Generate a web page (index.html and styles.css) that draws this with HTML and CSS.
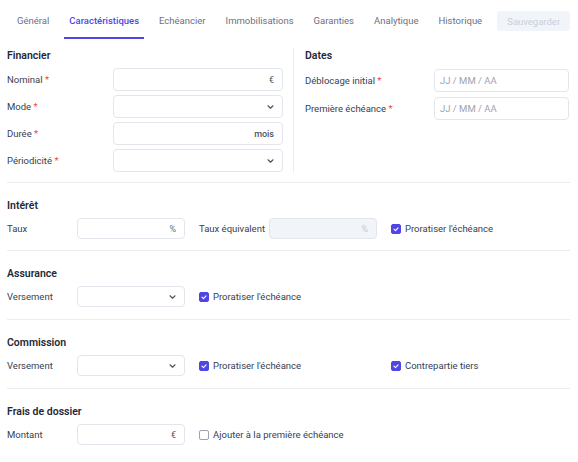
FILE: index.html
```html
<!DOCTYPE html>
<html lang="fr">
<head>
<meta charset="utf-8">
<title>Caractéristiques</title>
<link rel="stylesheet" href="styles.css">
</head>
<body>
<div class="page">
  <nav class="tabs">
    <span class="tab">Général</span>
    <span class="tab active">Caractéristiques</span>
    <span class="tab">Echéancier</span>
    <span class="tab">Immobilisations</span>
    <span class="tab">Garanties</span>
    <span class="tab">Analytique</span>
    <span class="tab">Historique</span>
    <button class="save" disabled>Sauvegarder</button>
  </nav>

  <section class="top">
    <div class="col col-left">
      <h2 class="heading">Financier</h2>
      <div class="frow"><label class="lbl">Nominal <span class="req">*</span></label><div class="inp wide"><span class="suffix">€</span></div></div>
      <div class="frow"><label class="lbl">Mode <span class="req">*</span></label><div class="inp wide"><svg class="chev" viewBox="0 0 7 4" width="7" height="4"><path d="M1 .8l2.5 2.4L6 .8" fill="none" stroke="#4b5563" stroke-width="1.2" stroke-linecap="round" stroke-linejoin="round"/></svg></div></div>
      <div class="frow"><label class="lbl">Durée <span class="req">*</span></label><div class="inp wide"><span class="suffix strong">mois</span></div></div>
      <div class="frow"><label class="lbl">Périodicité <span class="req">*</span></label><div class="inp wide"><svg class="chev" viewBox="0 0 7 4" width="7" height="4"><path d="M1 .8l2.5 2.4L6 .8" fill="none" stroke="#4b5563" stroke-width="1.2" stroke-linecap="round" stroke-linejoin="round"/></svg></div></div>
    </div>
    <div class="col col-right">
      <h2 class="heading">Dates</h2>
      <div class="frow r"><label class="lbl rl">Déblocage initial <span class="req">*</span></label><div class="inp date"><span class="ph">JJ / MM / AA</span></div></div>
      <div class="frow r"><label class="lbl rl">Première échéance <span class="req">*</span></label><div class="inp date"><span class="ph">JJ / MM / AA</span></div></div>
    </div>
  </section>

  <section class="sec first">
    <h2 class="heading">Intérêt</h2>
    <div class="grow">
      <div class="cell"><label class="lbl sl">Taux</label><div class="inp sm"><span class="suffix light">%</span></div></div>
      <div class="cell"><label class="lbl sl">Taux équivalent</label><div class="inp sm disabled"><span class="suffix faint">%</span></div></div>
      <div class="cell"><span class="cb checked"><svg viewBox="0 0 10 10" width="10" height="10"><path d="M3 5.2l1.5 1.4 2.6-2.8" fill="none" stroke="#fff" stroke-width="1.1" stroke-linecap="round" stroke-linejoin="round"/></svg></span><span class="cbl">Proratiser l'échéance</span></div>
    </div>
  </section>

  <section class="sec">
    <h2 class="heading">Assurance</h2>
    <div class="grow">
      <div class="cell"><label class="lbl sl">Versement</label><div class="inp sm"><svg class="chev" viewBox="0 0 7 4" width="7" height="4"><path d="M1 .8l2.5 2.4L6 .8" fill="none" stroke="#4b5563" stroke-width="1.2" stroke-linecap="round" stroke-linejoin="round"/></svg></div></div>
      <div class="cell"><span class="cb checked"><svg viewBox="0 0 10 10" width="10" height="10"><path d="M3 5.2l1.5 1.4 2.6-2.8" fill="none" stroke="#fff" stroke-width="1.1" stroke-linecap="round" stroke-linejoin="round"/></svg></span><span class="cbl">Proratiser l'échéance</span></div>
    </div>
  </section>

  <section class="sec">
    <h2 class="heading">Commission</h2>
    <div class="grow">
      <div class="cell"><label class="lbl sl">Versement</label><div class="inp sm"><svg class="chev" viewBox="0 0 7 4" width="7" height="4"><path d="M1 .8l2.5 2.4L6 .8" fill="none" stroke="#4b5563" stroke-width="1.2" stroke-linecap="round" stroke-linejoin="round"/></svg></div></div>
      <div class="cell"><span class="cb checked"><svg viewBox="0 0 10 10" width="10" height="10"><path d="M3 5.2l1.5 1.4 2.6-2.8" fill="none" stroke="#fff" stroke-width="1.1" stroke-linecap="round" stroke-linejoin="round"/></svg></span><span class="cbl">Proratiser l'échéance</span></div>
      <div class="cell"><span class="cb checked"><svg viewBox="0 0 10 10" width="10" height="10"><path d="M3 5.2l1.5 1.4 2.6-2.8" fill="none" stroke="#fff" stroke-width="1.1" stroke-linecap="round" stroke-linejoin="round"/></svg></span><span class="cbl">Contrepartie tiers</span></div>
    </div>
  </section>

  <section class="sec last">
    <h2 class="heading">Frais de dossier</h2>
    <div class="grow">
      <div class="cell"><label class="lbl sl">Montant</label><div class="inp sm"><span class="suffix">€</span></div></div>
      <div class="cell"><span class="cb"></span><span class="cbl">Ajouter à la première échéance</span></div>
    </div>
  </section>
</div>
</body>
</html>
```

FILE: styles.css
```css
* { box-sizing: border-box; }
html, body { margin: 0; padding: 0; background: #fff; }
body {
  font-family: Roboto, "Liberation Sans", sans-serif;
  font-size: 9.5px;
  color: #374151;
}
.page { padding: 0 8px 0 7px; }

.tabs {
  display: flex;
  align-items: stretch;
  height: 39px;
  padding-left: 5px;
  gap: 10px;
}
.tab {
  display: flex;
  align-items: center;
  flex-shrink: 0;
  padding: 3px 5px 0;
  border-bottom: 2px solid transparent;
  color: #6b7280;
  font-size: 9.5px;
}
.tab.active {
  color: #4f46e5;
  font-weight: 500;
  border-bottom-color: #4f46e5;
}
.save {
  margin-left: auto;
  flex-shrink: 0;
  align-self: flex-start;
  margin-top: 11px;
  width: 73px;
  height: 20px;
  border: none;
  border-radius: 3px;
  background: #f1f4f8;
  color: #c9d0da;
  font-family: inherit;
  font-size: 9.5px;
  padding: 0;
}

.heading {
  margin: 0 0 5px;
  font-size: 10.5px;
  line-height: 14px;
  font-weight: 600;
  color: #1f2937;
}

.top {
  display: grid;
  grid-template-columns: 286px 1fr;
  padding: 9px 0 10px;
  border-bottom: 1px solid #e9ecf0;
}
.col { display: flex; flex-direction: column; gap: 4px; }
.col .heading { margin: 1px 0 1px; }
.col-right {
  border-left: 1px solid #e9ecf0;
  padding-left: 11px;
  gap: 5px;
}
.frow { display: flex; align-items: center; }
.lbl { color: #374151; }
.col-left .lbl { width: 106px; }
.rl { width: 129px; }
.req { color: #ef4444; }

.inp {
  position: relative;
  display: flex;
  align-items: center;
  justify-content: flex-end;
  flex-shrink: 0;
  border: 1px solid #e2e6ec;
  border-radius: 4px;
  background: #fff;
  padding: 0 8px;
}
.inp.wide { width: 170px; height: 23px; }
.inp.date { width: 135px; height: 23px; justify-content: flex-start; padding: 0 5px; }
.inp.sm { width: 108px; height: 21px; }
.inp.disabled { background: #f1f4f8; }
.ph { color: #9ca3af; }
.suffix { color: #4b5563; font-size: 9px; }
.suffix.strong { font-weight: 500; color: #4b5563; }
.suffix.light { color: #6b7280; }
.suffix.faint { color: #c4cad3; }
.chev { display: block; }

.sec {
  padding: 16px 0 12px;
  border-bottom: 1px solid #e9ecf0;
}
.sec.first { padding-bottom: 11px; }
.sec.last { border-bottom: none; }
.grow { display: flex; }
.cell {
  display: flex;
  align-items: center;
  flex-shrink: 0;
  width: 192px;
  height: 21px;
}
.sl { width: 70px; flex-shrink: 0; }
.cb {
  width: 10px;
  height: 10px;
  border-radius: 2px;
  border: 1px solid #9ca3af;
  background: #fff;
  margin-right: 4px;
  display: flex;
  flex-shrink: 0;
}
.cb.checked { background: #4f46e5; border-color: #4f46e5; }
.cb svg { display: block; margin: -1px; }
.cbl { color: #374151; }
```
